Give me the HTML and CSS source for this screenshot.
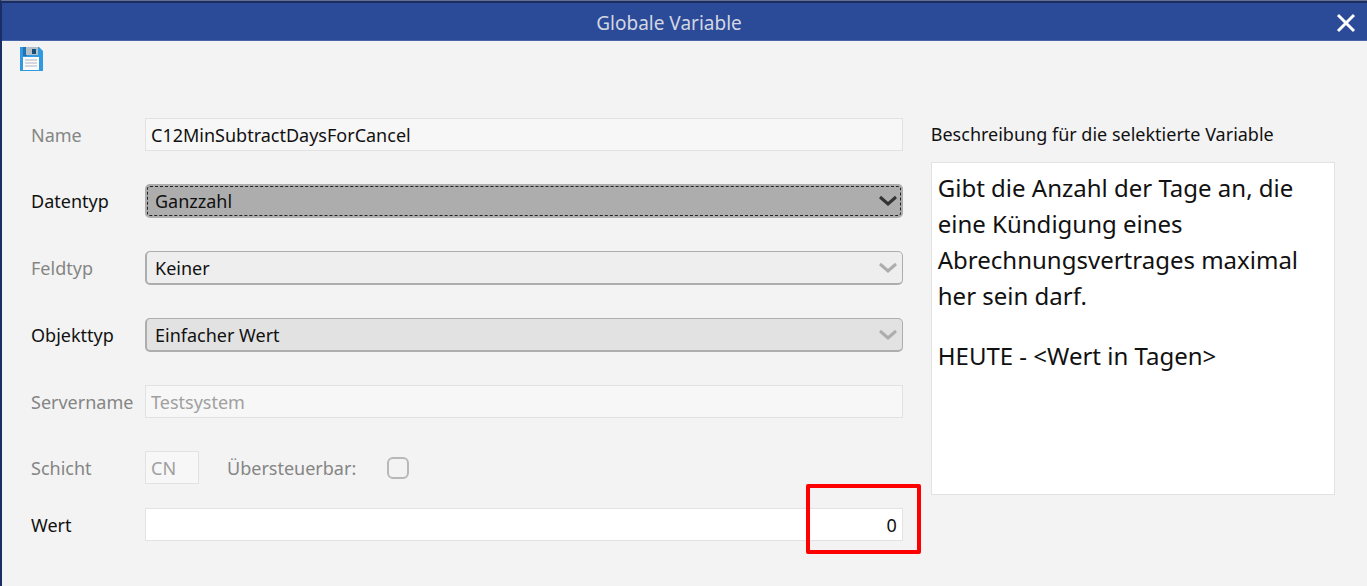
FILE: index.html
```html
<!DOCTYPE html>
<html lang="de">
<head>
    <meta charset="UTF-8">
    <meta name="viewport" content="width=device-width, initial-scale=1.0">
    <title>Globale Variable</title>
    <link rel="stylesheet" href="styles.css">
</head>
<body>
    <div class="dialog">
        <header class="titlebar">
            <h1>Globale Variable</h1>
            <button type="button" class="close" aria-label="Schließen">
                <svg width="20" height="20" viewBox="0 0 20 20" fill="none" stroke="#fff" stroke-width="3">
                    <path d="M2 2l16 16M18 2L2 18"/>
                </svg>
            </button>
        </header>

        <div class="toolbar">
            <button type="submit" form="variableForm" class="save" aria-label="Speichern">
                <svg width="24" height="24" viewBox="0 0 24 24">
                    <path d="M1 0h19l4 4v20H1z" fill="#2f9ae0"/>
                    <path d="M4 0h4v9H4z" fill="#1f74b5"/>
                    <path d="M7 0h12v8H7z" fill="#b4bfc8"/>
                    <path d="M13 2h4v5h-4z" fill="#174f7c"/>
                    <path d="M4 10h16v13H4z" fill="#fcfcfc"/>
                    <path d="M6 13h12M6 16h12M6 19h12" stroke="#c6ccd2" stroke-width="1.4"/>
                </svg>
            </button>
        </div>

        <main class="content">
            <form id="variableForm" class="form">
                <div class="row">
                    <label for="name" class="muted">Name</label>
                    <input type="text" id="name" class="locked" value="C12MinSubtractDaysForCancel" readonly>
                </div>
                <div class="row">
                    <label for="datentyp">Datentyp</label>
                    <div class="select focused">
                        <select id="datentyp">
                            <option>Ganzzahl</option>
                        </select>
                        <svg class="arrow" width="18" height="12" viewBox="0 0 18 12"><path d="M1 2l8 7 8-7"/></svg>
                    </div>
                </div>
                <div class="row">
                    <label for="feldtyp" class="muted">Feldtyp</label>
                    <div class="select light">
                        <select id="feldtyp" disabled>
                            <option>Keiner</option>
                        </select>
                        <svg class="arrow" width="18" height="12" viewBox="0 0 18 12"><path d="M1 2l8 7 8-7"/></svg>
                    </div>
                </div>
                <div class="row">
                    <label for="objekttyp">Objekttyp</label>
                    <div class="select">
                        <select id="objekttyp">
                            <option>Einfacher Wert</option>
                        </select>
                        <svg class="arrow" width="18" height="12" viewBox="0 0 18 12"><path d="M1 2l8 7 8-7"/></svg>
                    </div>
                </div>
                <div class="row">
                    <label for="servername" class="muted">Servername</label>
                    <input type="text" id="servername" class="locked" value="Testsystem" disabled>
                </div>
                <div class="row">
                    <label for="schicht" class="muted">Schicht</label>
                    <div class="inline">
                        <input type="text" id="schicht" class="locked short" value="CN" disabled>
                        <label for="override" class="muted">Übersteuerbar:</label>
                        <input type="checkbox" id="override" disabled>
                    </div>
                </div>
                <div class="row last">
                    <label for="wert">Wert</label>
                    <div class="value">
                        <input type="text" id="wert" value="0">
                        <span class="marker"></span>
                    </div>
                </div>
            </form>

            <section class="description">
                <h2>Beschreibung für die selektierte Variable</h2>
                <div class="text">
                    <p>Gibt die Anzahl der Tage an, die eine Kündigung eines Abrechnungsvertrages maximal her sein darf.</p>
                    <p>HEUTE - &lt;Wert in Tagen&gt;</p>
                </div>
            </section>
        </main>
    </div>
</body>
</html>
```
FILE: styles.css
```css
* {
    box-sizing: border-box;
}

body {
    margin: 0;
    background-color: #f3f3f3;
    color: #111;
    font-family: "Noto Sans", "Open Sans", sans-serif;
    font-size: 18px;
}

.dialog {
    min-height: 100vh;
    border-left: 2px solid #1b2e63;
    border-top: 1px solid #64708f;
}

.titlebar {
    display: flex;
    align-items: center;
    height: 40px;
    padding: 2px 11px 0 0;
    background-color: #2b4a98;
    border-top: 2px solid #1b2e63;
    border-bottom: 1px solid #4a64ab;
}

h1 {
    flex: 1;
    margin: 0;
    color: #d3d7e2;
    font-size: 19px;
    font-weight: normal;
    line-height: 26px;
    text-align: center;
}

button {
    display: flex;
    padding: 0;
    border: none;
    background: none;
    cursor: pointer;
}

.toolbar {
    padding: 6px 17px;
}

.content {
    display: flex;
    gap: 28px;
    padding: 41px 32px 40px 29px;
}

.form {
    flex: 1;
    display: flex;
    flex-direction: column;
    gap: 33px;
}

.row {
    display: flex;
    align-items: center;
}

.row > label {
    flex: none;
    width: 114px;
}

.row.last {
    margin-top: -9px;
}

.muted {
    color: #858585;
}

input[type="text"] {
    flex: 1;
    width: 100%;
    height: 33px;
    padding: 0 5px;
    border: 1px solid #e2e2e2;
    background-color: #fff;
    color: #111;
    font: inherit;
}

input.locked {
    background-color: #f7f7f7;
}

input:disabled {
    color: #a0a0a0;
}

input.short {
    flex: none;
    width: 54px;
}

.select {
    flex: 1;
    display: grid;
    align-items: center;
}

.select select,
.select .arrow {
    grid-area: 1 / 1;
}

select {
    appearance: none;
    width: 100%;
    height: 34px;
    padding: 0 40px 0 8px;
    border: 2px solid #adadad;
    border-right-width: 1px;
    border-top-width: 1px;
    border-radius: 5px;
    background-color: #e2e2e2;
    color: #111;
    font: inherit;
    opacity: 1;
}

.arrow {
    justify-self: end;
    margin-right: 6px;
    fill: none;
    stroke: #adadad;
    stroke-width: 3;
    pointer-events: none;
}

.light select {
    background-color: #eee;
}

.focused select {
    background-color: #adadad;
    outline: 1px dashed #222;
    outline-offset: -3px;
}

.focused .arrow {
    stroke: #333;
}

.inline {
    display: flex;
    align-items: center;
}

.inline label {
    width: 160px;
    margin-left: 28px;
}

input[type="checkbox"] {
    appearance: none;
    width: 22px;
    height: 22px;
    margin: 0;
    border: 2px solid #b8b8b8;
    border-radius: 6px;
    background-color: #f3f3f3;
}

.value {
    position: relative;
    flex: 1;
    display: flex;
}

.value input {
    text-align: right;
}

/* red frame around the value */
.marker {
    position: absolute;
    top: -24px;
    right: -18px;
    width: 115px;
    height: 70px;
    border: 4px solid #f00;
    border-radius: 2px;
    pointer-events: none;
}

.description {
    flex: none;
    width: 31%;
    display: flex;
    flex-direction: column;
}

h2 {
    margin: 0 0 11px;
    font-size: 18px;
    font-weight: normal;
    line-height: 33px;
    white-space: nowrap;
}

.text {
    min-height: 333px;
    padding: 7px 6px;
    border: 1px solid #e2e2e2;
    background-color: #fff;
    font-size: 24px;
    line-height: 36px;
}

.text p {
    margin: 0 0 24px;
}
```
